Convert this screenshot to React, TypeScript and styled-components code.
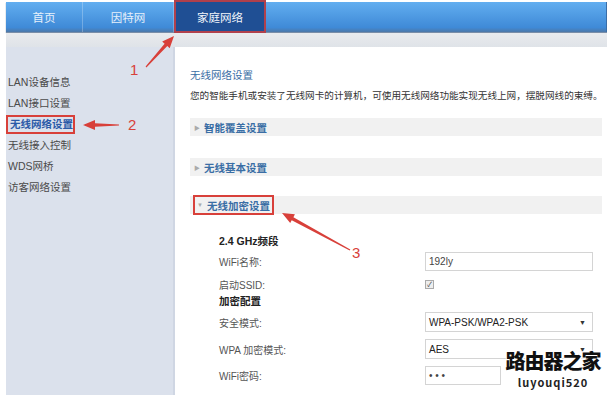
import React from 'react'
import styled, { createGlobalStyle } from 'styled-components'

const FONT = `"Liberation Sans", "Noto Sans CJK SC", sans-serif`
const RED = '#d8403a'

const GlobalStyle = createGlobalStyle`
  html, body {
    margin: 0;
    padding: 0;
    background: #fff;
    font-family: ${FONT};
  }
  body {
    width: 607px;
    height: 395px;
    overflow: hidden;
  }
`

const Page = styled.div`
  position: relative;
  width: 607px;
  height: 395px;
  padding-left: 6px;
  box-sizing: border-box;
  overflow: hidden;
`

const TopBar = styled.div`
  display: flex;
  align-items: stretch;
  height: 30px;
  margin-top: 2px;
  width: 600px;
  background: linear-gradient(#62aef0, #3f8ad7 85%, #4d78a8);
  border-right: 1px solid #3a6ea8;
  box-shadow: 0 1px 1px #7a8ea8;
`

const NavItem = styled.div<{ $w: number; $active?: boolean }>`
  width: ${(p) => p.$w}px;
  display: flex;
  align-items: center;
  justify-content: center;
  font-size: 11.5px;
  color: #e6f0fb;
  border-right: 1px solid ${(p) => (p.$active ? 'transparent' : 'rgba(255,255,255,0.25)')};
  ${(p) =>
    p.$active &&
    `
    margin-top: -2px;
    height: 33px;
    box-sizing: border-box;
    background: #1f4f94;
    border: 2px solid #b0404c;
    color: #f2f6fb;
  `}
`

const Band = styled.div`
  height: 14px;
  margin-top: 1px;
  background: linear-gradient(#e9ebee, #dfe3e8);
`

const Body = styled.div`
  display: flex;
  height: 348px;
`

const Sidebar = styled.div`
  flex-shrink: 0;
  width: 167px;
  background: #dbe1ec;
  border-right: 2px solid #cfd6e3;
  padding-top: 28px;
  display: flex;
  flex-direction: column;
  gap: 6px;
`

const SideItem = styled.div<{ $active?: boolean }>`
  font-size: 10.5px;
  line-height: 15px;
  padding-left: 2px;
  color: ${(p) => (p.$active ? '#2b5aa8' : '#4a4a4a')};
  font-weight: ${(p) => (p.$active ? 'bold' : 'normal')};
  ${(p) =>
    p.$active &&
    `
    align-self: flex-start;
    border: 2px solid ${RED};
    margin: -2px 0;
  `}
`

const Main = styled.div`
  flex: 1;
  min-width: 0;
  padding: 21px 0 0 15px;
  display: flex;
  flex-direction: column;
`

const Title = styled.div`
  font-size: 10.5px;
  color: #3a6ea5;
  line-height: 14px;
`

const Desc = styled.div`
  margin-top: 7px;
  font-size: 9.6px;
  color: #333;
  white-space: nowrap;
  line-height: 14px;
`

const Section = styled.div<{ $gap: number }>`
  margin-top: ${(p) => p.$gap}px;
  height: 18px;
  width: 412px;
  background: #f1f1f1;
  display: flex;
  align-items: center;
`

const SectionLabel = styled.div<{ $boxed?: boolean }>`
  display: flex;
  align-items: center;
  gap: 4px;
  height: 18px;
  padding: 0 4px;
  box-sizing: border-box;
  font-size: 10.5px;
  font-weight: bold;
  color: #3a6ea5;
  ${(p) => p.$boxed && `border: 2px solid ${RED}; height: 20px; margin-left: 3px; padding: 0 2px;`}
`

const Caret = styled.span`
  font-size: 6px;
  color: #aaa;
`

const Form = styled.div`
  padding-left: 29px;
  margin-top: 20px;
  display: flex;
  flex-direction: column;
`

const Heading = styled.div`
  font-size: 10.5px;
  font-weight: bold;
  color: #222;
  line-height: 14px;
`

const Row = styled.div<{ $h: number }>`
  display: flex;
  align-items: center;
  height: ${(p) => p.$h}px;
`

const Label = styled.div`
  width: 206px;
  flex-shrink: 0;
  font-size: 10px;
  color: #555;
`

const Input = styled.div<{ $w?: number }>`
  width: ${(p) => p.$w ?? 168}px;
  flex-shrink: 0;
  height: 19px;
  box-sizing: border-box;
  border: 1px solid #d4d4d4;
  padding-left: 3px;
  font-size: 10px;
  color: #444;
  display: flex;
  align-items: center;
`

const Select = styled(Input)`
  justify-content: space-between;
  padding-right: 6px;
  height: 20px;
  color: #222;
  &::after {
    content: '▼';
    font-size: 7px;
    color: #333;
  }
`

const Check = styled.div`
  width: 7px;
  height: 7px;
  border: 1px solid #aaa;
  background: #eee;
  font-size: 7px;
  line-height: 7px;
  color: #444;
  text-align: center;
`

const Num = styled.span<{ $x: number; $y: number }>`
  position: absolute;
  left: ${(p) => p.$x}px;
  top: ${(p) => p.$y}px;
  font-size: 15px;
  color: ${RED};
  font-family: ${FONT};
`

const Overlay = styled.svg`
  position: absolute;
  left: 0;
  top: 0;
  pointer-events: none;
`

const Watermark = styled.div`
  position: absolute;
  left: 503px;
  top: 348px;
  width: 100px;
  height: 47px;
  display: flex;
  flex-direction: column;
  align-items: center;
  font-family: "Noto Sans CJK SC", sans-serif;
  text-shadow: 1px 1px 0 #fff, -1px -1px 0 #fff, 1px -1px 0 #fff, -1px 1px 0 #fff;
`

const WmTitle = styled.div`
  font-size: 20px;
  font-weight: 900;
  color: #111;
  letter-spacing: -1px;
  line-height: 26px;
`

const WmSub = styled.div`
  font-size: 11px;
  font-weight: bold;
  color: #222;
  letter-spacing: 1px;
  line-height: 16px;
`

function arrow(tx: number, ty: number, hx: number, hy: number) {
  const dx = hx - tx
  const dy = hy - ty
  const len = Math.hypot(dx, dy)
  const ux = dx / len
  const uy = dy / len
  const nx = -uy
  const ny = ux
  const headLen = 12
  const bx = hx - ux * headLen
  const by = hy - uy * headLen
  const pts = [
    [tx + nx * 0.6, ty + ny * 0.6],
    [bx + nx * 1.8, by + ny * 1.8],
    [bx + nx * 5, by + ny * 5],
    [hx, hy],
    [bx - nx * 5, by - ny * 5],
    [bx - nx * 1.8, by - ny * 1.8],
    [tx - nx * 0.6, ty - ny * 0.6],
  ]
  return pts.map((p) => p.map((v) => v.toFixed(1)).join(',')).join(' ')
}

const App: React.FC = () => (
  <Page>
    <GlobalStyle />
    <TopBar>
      <NavItem $w={76}>首页</NavItem>
      <NavItem $w={90}>因特网</NavItem>
      <NavItem $w={92} $active>
        家庭网络
      </NavItem>
    </TopBar>
    <Band />
    <Body>
      <Sidebar>
        <SideItem>LAN设备信息</SideItem>
        <SideItem>LAN接口设置</SideItem>
        <SideItem $active>无线网络设置</SideItem>
        <SideItem>无线接入控制</SideItem>
        <SideItem>WDS网桥</SideItem>
        <SideItem>访客网络设置</SideItem>
      </Sidebar>
      <Main>
        <Title>无线网络设置</Title>
        <Desc>您的智能手机或安装了无线网卡的计算机，可使用无线网络功能实现无线上网，摆脱网线的束缚。</Desc>
        <Section $gap={15}>
          <SectionLabel>
            <Caret>▶</Caret>智能覆盖设置
          </SectionLabel>
        </Section>
        <Section $gap={22}>
          <SectionLabel>
            <Caret>▶</Caret>无线基本设置
          </SectionLabel>
        </Section>
        <Section $gap={20}>
          <SectionLabel $boxed>
            <Caret>▼</Caret>无线加密设置
          </SectionLabel>
        </Section>
        <Form>
          <Heading>2.4 GHz频段</Heading>
          <Row $h={26}>
            <Label>WiFi名称:</Label>
            <Input>192ly</Input>
          </Row>
          <Row $h={20}>
            <Label>启动SSID:</Label>
            <Check>✓</Check>
          </Row>
          <Heading>加密配置</Heading>
          <Row $h={28}>
            <Label>安全模式:</Label>
            <Select>WPA-PSK/WPA2-PSK</Select>
          </Row>
          <Row $h={26}>
            <Label>WPA 加密模式:</Label>
            <Select>AES</Select>
          </Row>
          <Row $h={26}>
            <Label>WiFi密码:</Label>
            <Input $w={76}>• • •</Input>
          </Row>
        </Form>
      </Main>
    </Body>
    <Watermark>
      <WmTitle>路由器之家</WmTitle>
      <WmSub>luyouqi520</WmSub>
    </Watermark>
    <Overlay width={607} height={395}>
      <polygon points={arrow(146, 67, 174, 36)} fill={RED} />
      <polygon points={arrow(119, 125, 83, 125)} fill={RED} />
      <polygon points={arrow(350, 250, 282, 213)} fill={RED} />
    </Overlay>
    <Num $x={130} $y={61}>1</Num>
    <Num $x={128} $y={116}>2</Num>
    <Num $x={352} $y={244}>3</Num>
  </Page>
)

export default App
